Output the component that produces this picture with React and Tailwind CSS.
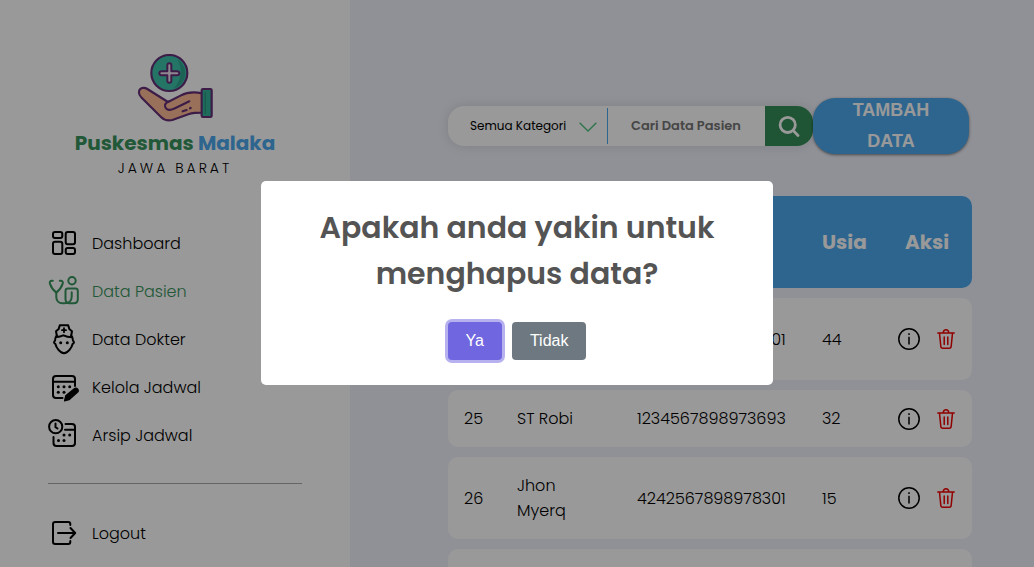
import React from "react";

const Icon = ({ children }) => (
  <svg
    viewBox="0 0 32 32"
    className="h-8 w-8 shrink-0"
    fill="none"
    stroke="currentColor"
    strokeWidth="2"
    strokeLinecap="round"
    strokeLinejoin="round"
    aria-hidden="true"
  >
    {children}
  </svg>
);

const Dots = ({ points }) => (
  <g fill="currentColor" stroke="none">
    {points.map(([x, y]) => (
      <circle key={`${x}-${y}`} cx={x} cy={y} r="1.5" />
    ))}
  </g>
);

const DashboardIcon = () => (
  <Icon>
    <rect x="5" y="5" width="9.3" height="6" rx="2" />
    <rect x="17.7" y="5" width="9.3" height="12.3" rx="2" />
    <rect x="5" y="14.7" width="9.3" height="12.3" rx="2" />
    <rect x="17.7" y="21" width="9.3" height="6" rx="2" />
  </Icon>
);

const PatientIcon = () => (
  <Icon>
    <circle cx="24" cy="5.7" r="3.7" />
    <path d="M4.8 5.7H4C2.2 5.7 1.4 7 1.9 8.6 3 12 5 15 8.3 17.6 11.6 15 13.6 12 14.7 8.6 15.2 7 14.4 5.7 12.6 5.7h-.8" />
    <path d="M8.3 17.6V22c0 4 2.6 6.3 6.2 6.3h1.8c4.6 0 7.4-2.6 7.4-6.6v-4.5" />
    <path d="M17.5 24v-8c0-1.5.9-2.4 2.4-2.4h7.5c1.5 0 2.4.9 2.4 2.4v8.3c0 2.5-1.5 4-4 4h-4.3c-2.5 0-4-1.7-4-4.3z" />
  </Icon>
);

const DoctorIcon = () => (
  <Icon>
    <path d="M8.800 12.500 8 8.200 10.700 6l1.100-3.800h8.400L21.300 6 24 8.200l-.8 4.300" />
    <path d="M16 5.200v4M14 7.200h4" strokeWidth="1.800" />
    <path d="M8.800 12.500C7.300 14 7 15.500 7 17.800c-1.400.6-1.200 2.600.4 3.200C8.200 24.500 12 30.300 16 30.300s7.800-5.800 8.600-9.300c1.600-.6 1.800-2.600.4-3.200 0-2.300-.3-3.800-1.800-5.300" />
    <path d="M9 14c3-.2 4.800-1 6.500-1.700 2.500 1.300 5 1.900 8.500 2" />
    <Dots points={[[12.7, 19.7], [19.3, 19.7]]} />
  </Icon>
);

const ScheduleIcon = () => (
  <Icon>
    <path d="M14.5 27H8c-1.8 0-3-1.2-3-3V8c0-1.8 1.2-3 3-3h16c1.8 0 3 1.2 3 3v7M5 10.7h22" />
    <Dots points={[[10.3, 15.7], [16, 15.7], [21.7, 15.7], [10.3, 21.3], [16, 21.3]]} />
    <path
      d="M16.5 29.8l1.200-5 8.600-7c1-.8 2.500-.7 3.400.3.800 1 .7 2.400-.3 3.300l-8.300 7.300z"
      fill="currentColor"
      strokeWidth="1.2"
    />
  </Icon>
);

const ArchiveIcon = () => (
  <Icon>
    <circle cx="7.7" cy="7.7" r="6.6" />
    <path d="M7.5 4.5v3.7l2 1.3" />
    <path d="M5.5 18v6c0 1.8 1.2 3 3 3H24c1.8 0 3-1.2 3-3V8c0-1.8-1.2-3-3-3h-6.5M17 10.7h10" />
    <Dots points={[[16, 15.9], [21.7, 15.9], [10.5, 21.5], [16, 21.5]]} />
  </Icon>
);

const LogoutIcon = () => (
  <Icon>
    <path d="M22.300 8V7c0-1.300-.9-2-2-2H7.300C6 5 5 6 5 7.300v17.400C5 26 6 27 7.300 27h13c1.100 0 2-.7 2-2v-1" />
    <path d="M10 16h17M22.500 11l4.700 5-4.700 5" />
  </Icon>
);

const Logo = () => (
  <svg viewBox="231 42 228 204" className="h-[68px] w-[76px]" aria-hidden="true">
    <g stroke="#662f79" strokeWidth="6.5" strokeLinecap="round" strokeLinejoin="round">
      <circle cx="328" cy="99" r="54" fill="#3cc3ab" />
      <path d="M352 58a48 48 0 0 1-12 88a72 72 0 0 0 12-88z" fill="#2fa690" stroke="none" />
      <path
        d="M322 76c0-4 3-6 6-6s6 2 6 6v18h17c4 0 7 3 7 6s-3 6-7 6h-17v16c0 4-3 6-6 6s-6-2-6-6v-16h-17c-4 0-7-3-7-6s3-6 7-6h17z"
        fill="#eee3f2"
        strokeWidth="6"
      />
      <path
        d="M262 147C252 140 238 144 237 155c-1 6 2 12 8 18l58 58c9 9 21 12 34 9l50-18c13-4 25-4 40-4v-58c-25-5-47-3-64 6l-39 20z"
        fill="#ffbd98"
      />
      <path d="M388 184l-46 22c-11 6-22 5-26-4-4-8 2-14 9-17" fill="none" />
      <path d="M368 214l12-4M390 205l2-1" fill="none" />
      <rect x="425" y="147" width="30" height="84" rx="4" fill="#35b49c" />
      <path d="M436 158v62" stroke="#2a9681" strokeWidth="4" />
    </g>
  </svg>
);

const InfoIcon = () => (
  <svg viewBox="0 0 22 22" className="h-[22px] w-[22px]" fill="none" stroke="currentColor" strokeWidth="1.5" aria-hidden="true">
    <circle cx="11" cy="11" r="10.2" />
    <path d="M11 8.700v7.800M11 5.300v1.700" />
  </svg>
);

const TrashIcon = () => (
  <svg
    viewBox="0 0 18 20"
    className="h-5 w-[18px]"
    fill="none"
    stroke="currentColor"
    strokeWidth="1.5"
    strokeLinecap="round"
    strokeLinejoin="round"
    aria-hidden="true"
  >
    <path d="M.8 4h16.400M6.200 3.800C6.400 2 7.400.8 9 .8s2.600 1.200 2.800 3M2.500 4.200l1.300 13c.1 1.200.8 2 2 2h6.400c1.200 0 1.900-.8 2-2l1.300-13M7.200 8v7.500M10.800 8v7.500" />
  </svg>
);

const menu = [
  { label: "Dashboard", icon: DashboardIcon },
  { label: "Data Pasien", icon: PatientIcon, active: true },
  { label: "Data Dokter", icon: DoctorIcon },
  { label: "Kelola Jadwal", icon: ScheduleIcon },
  { label: "Arsip Jadwal", icon: ArchiveIcon },
];

const patients = [
  { no: 24, name: "Jhon Myerq", nik: "4242567898978301", age: 44 },
  { no: 25, name: "ST Robi", nik: "1234567898973693", age: 32 },
  { no: 26, name: "Jhon Myerq", nik: "4242567898978301", age: 15 },
  { no: 27, name: "Jhon Myerq", nik: "4242567898978301", age: 15 },
];

const MenuLink = ({ label, icon: Glyph, active }) => (
  <a
    href="#"
    aria-current={active ? "page" : undefined}
    className={active ? "flex items-center gap-3 text-[#37935c]" : "flex items-center gap-3 text-black"}
  >
    <Glyph />
    <span className="text-base leading-[25px] font-light">{label}</span>
  </a>
);

function Sidebar() {
  return (
    <aside className="w-[350px] shrink-0 bg-white px-12 pt-[54px]">
      <div className="flex flex-col items-center">
        <Logo />
        <p className="mt-1.5 text-xl leading-[30px] font-bold whitespace-nowrap text-[#37935c]">
          Puskesmas <span className="text-[#4ba8ee]">Malaka</span>
        </p>
        <p className="text-sm leading-5 font-light tracking-[3px] text-black">JAWA BARAT</p>
      </div>
      <nav className="mt-[49px] flex flex-col gap-4">
        {menu.map((item) => (
          <MenuLink key={item.label} {...item} />
        ))}
      </nav>
      <hr className="mt-8 mb-[33px] border-[#a8a8a8]" />
      <MenuLink label="Logout" icon={LogoutIcon} />
    </aside>
  );
}

function Toolbar() {
  return (
    <div className="flex items-start">
      <form
        className="mt-2 flex h-10 min-w-0 flex-1 items-center overflow-hidden rounded-2xl bg-white shadow-[0_0_12px_rgba(0,0,0,0.12)]"
        onSubmit={(e) => e.preventDefault()}
      >
        <div className="relative h-9 w-40 shrink-0 border-r border-[#4ba8ee]">
          <select
            aria-label="Kategori"
            className="h-full w-full appearance-none bg-transparent pl-[22px] text-xs text-black outline-none"
          >
            <option>Semua Kategori</option>
          </select>
          <svg
            viewBox="0 0 18 10"
            className="pointer-events-none absolute top-3.5 right-2.5 h-2.5 w-[18px]"
            fill="none"
            stroke="#4cc27d"
            strokeWidth="1.3"
            aria-hidden="true"
          >
            <path d="M.6.8 9 9 17.400.8" />
          </svg>
        </div>
        <input
          type="text"
          aria-label="Cari Data Pasien"
          placeholder="Cari Data Pasien"
          className="h-full min-w-0 flex-1 pr-2 pl-[23px] text-[13px] font-semibold outline-none placeholder:text-[#757575]"
        />
        <button type="submit" aria-label="Cari" className="flex h-full w-12 shrink-0 items-center justify-center bg-[#358e58] text-white">
          <svg viewBox="0 0 22 22" className="h-[22px] w-[22px]" fill="none" stroke="currentColor" strokeWidth="2.800" strokeLinecap="round" aria-hidden="true">
            <circle cx="9.700" cy="9.900" r="7.600" />
            <path d="M15.200 15.500l4.800 4.900" />
          </svg>
        </button>
      </form>
      <button
        type="button"
        className="mr-[3px] flex h-14 w-[156px] shrink-0 items-center justify-center rounded-[22px] bg-[#4ba8ee] px-8 font-['Liberation_Sans',sans-serif] text-lg leading-[31px] font-bold text-white shadow-[0_1px_3px_rgba(0,0,0,0.5)]"
      >
        TAMBAH DATA
      </button>
    </div>
  );
}

function PatientTable() {
  return (
    <table className="mt-8 w-full table-fixed border-separate border-spacing-x-0 border-spacing-y-2.5 text-left">
      <thead>
        <tr className="h-[92px] bg-[#4ba8ee] text-xl text-white">
          <th scope="col" className="w-[53px] rounded-l-[10px] pl-4">No</th>
          <th scope="col" className="pl-4">Nama</th>
          <th scope="col" className="w-[185px] pl-4">NIK</th>
          <th scope="col" className="w-[76px] pl-4">Usia</th>
          <th scope="col" className="w-[90px] rounded-r-[10px] text-center">Aksi</th>
        </tr>
      </thead>
      <tbody>
        {patients.map((p) => (
          <tr key={p.no} className="bg-white text-base leading-[25px] font-light text-black">
            <td className="rounded-l-[10px] py-4 pl-4">{p.no}</td>
            <td className="py-4 pr-8 pl-4">{p.name}</td>
            <td className="py-4 pl-4">{p.nik}</td>
            <td className="py-4 pl-4">{p.age}</td>
            <td className="rounded-r-[10px] pl-4">
              <div className="flex items-center gap-[17px]">
                <button type="button" aria-label="Detail" className="text-black">
                  <InfoIcon />
                </button>
                <button type="button" aria-label="Hapus" className="text-[#f00000]">
                  <TrashIcon />
                </button>
              </div>
            </td>
          </tr>
        ))}
      </tbody>
    </table>
  );
}

function ConfirmDialog() {
  return (
    <div className="fixed inset-0 flex items-center justify-center bg-black/40 pb-px">
      <div
        role="dialog"
        aria-modal="true"
        aria-labelledby="confirm-title"
        className="w-full max-w-lg rounded-[5px] bg-white px-8 pt-6 pb-[25px] text-center"
      >
        <h2 id="confirm-title" className="text-3xl leading-[46px] font-semibold text-[#545454]">
          Apakah anda yakin untuk menghapus data?
        </h2>
        <div className="mt-[25px] flex justify-center gap-2.5 font-['Liberation_Sans',sans-serif] text-base leading-[18px] text-white">
          <button type="button" className="rounded-sm bg-[#7066e0] px-[18px] py-2.5 ring-3 ring-[#7066e0]/50">
            Ya
          </button>
          <button type="button" className="rounded-sm bg-[#6e7881] px-[18px] py-2.5">
            Tidak
          </button>
        </div>
      </div>
    </div>
  );
}

export default function App() {
  return (
    <div className="flex h-screen overflow-hidden bg-[#f0f2fa] font-['Poppins','Inter',sans-serif]">
      <Sidebar />
      <main className="min-w-0 flex-1 pt-[98px] pr-[62px] pl-[98px]">
        <Toolbar />
        <PatientTable />
      </main>
      <ConfirmDialog />
    </div>
  );
}
